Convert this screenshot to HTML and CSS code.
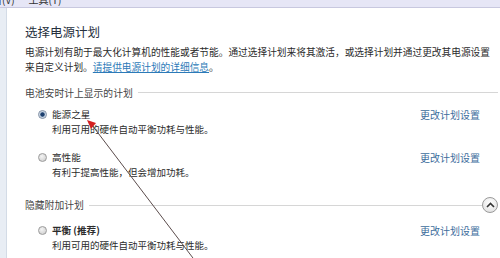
FILE: index.html
```html
<!DOCTYPE html>
<html lang="zh-CN">
<head>
    <meta charset="UTF-8">
    <title>电源选项</title>
    <link rel="stylesheet" href="styles.css">
</head>
<body>
    <div class="menubar">
        <span class="menu-item">查看(V)</span>
        <span class="menu-item">工具(T)</span>
    </div>

    <div class="window">
        <div class="sidebar"></div>

        <div class="main">
            <h1 class="title">选择电源计划</h1>
            <p class="intro">电源计划有助于最大化计算机的性能或者节能。通过选择计划来将其激活，或选择计划并通过更改其电源设置来自定义计划。<a href="#" class="info-link">请提供电源计划的详细信息</a>。</p>

            <div class="section-head">电池安时计上显示的计划</div>

            <div class="plan">
                <span class="radio checked"></span>
                <span class="plan-name">能源之星</span>
                <a href="#" class="plan-link">更改计划设置</a>
                <span class="plan-desc">利用可用的硬件自动平衡功耗与性能。</span>
            </div>

            <div class="plan">
                <span class="radio"></span>
                <span class="plan-name">高性能</span>
                <a href="#" class="plan-link">更改计划设置</a>
                <span class="plan-desc">有利于提高性能，但会增加功耗。</span>
            </div>

            <div class="section-head hidden-plans">
                隐藏附加计划
                <span class="collapse-btn">
                    <svg width="9" height="6" viewBox="0 0 9 6"><path d="M1 5 L4.5 1.5 L8 5" fill="none" stroke="#333" stroke-width="1.6"/></svg>
                </span>
            </div>

            <div class="plan">
                <span class="radio"></span>
                <span class="plan-name bold">平衡 (推荐)</span>
                <a href="#" class="plan-link">更改计划设置</a>
                <span class="plan-desc">利用可用的硬件自动平衡功耗与性能。</span>
            </div>
        </div>
    </div>

    <!-- annotation arrow drawn over the screenshot -->
    <svg class="annotation" width="500" height="258" viewBox="0 0 500 258">
        <line x1="92" y1="125" x2="196" y2="262" stroke="#5b4c4c" stroke-width="1"/>
        <polygon points="87,120 96,123 91,129" fill="#d42020"/>
    </svg>
</body>
</html>
```

FILE: styles.css
```css
/* General */
body {
    margin: 0;
    width: 500px;
    height: 258px;
    overflow: hidden;
    position: relative;
    background: #fff;
    font-family: "Noto Sans CJK SC", "Noto Sans", sans-serif;
    color: #2b2b2b;
}
a {
    text-decoration: none;
}

/* Menu bar (cut off at the top) */
.menubar {
    height: 7px;
    overflow: hidden;
    background: #e6e6f6;
    border-bottom: 1px solid #c8c8df;
    display: flex;
    gap: 14px;
    padding-left: 0;
    margin-left: -18px;
}
.menu-item {
    font-size: 10px;
    line-height: 10px;
    margin-top: -5px;
    color: #333;
}

/* Window body */
.window {
    display: flex;
    height: 250px;
}
.sidebar {
    width: 6px;
    background: #e8edf4;
    border-right: 1px solid #d3dbe6;
}
.main {
    flex: 1;
    padding: 0 2px 0 18px;
}

/* Heading and intro */
.title {
    font-size: 12.5px;
    font-weight: normal;
    line-height: 16px;
    margin: 16px 0 0;
    color: #26303d;
}
.intro {
    font-size: 9.7px;
    line-height: 15px;
    margin: 4.5px 0 0;
    color: #2b2b2b;
}
.info-link {
    color: #2c7ab8;
    text-decoration: underline;
}

/* Section headers */
.section-head {
    display: flex;
    align-items: center;
    font-size: 9.8px;
    line-height: 14px;
    color: #444;
    margin-top: 11px;
    margin-bottom: 7px;
}
.section-head::after {
    content: "";
    flex: 1;
    height: 1px;
    background: #d6d6d6;
    margin-left: 5px;
}
.hidden-plans {
    margin-top: 17px;
    margin-bottom: 10px;
}
.hidden-plans::after {
    order: 1;
}
.collapse-btn {
    order: 2;
    width: 14px;
    height: 14px;
    border: 1px solid #9a9a9a;
    border-radius: 50%;
    background: radial-gradient(circle at 50% 35%, #ffffff, #dcdcdc);
    display: flex;
    align-items: center;
    justify-content: center;
}

/* Plans */
.plan {
    display: grid;
    grid-template-columns: 9px 1fr auto;
    column-gap: 5px;
    padding-left: 13px;
    align-items: center;
}
.plan + .plan {
    margin-top: 13.5px;
}
.radio {
    width: 7px;
    height: 7px;
    border: 1px solid #9b9b9b;
    border-radius: 50%;
    background: radial-gradient(circle at 40% 35%, #f4f4f4, #c9c9c9);
}
.radio.checked {
    background: radial-gradient(circle, #1d3f6e 0 1.8px, #9fb4cc 2.4px, #e8eef5 3.5px);
    border-color: #7f8ea3;
}
.plan-name {
    font-size: 9.6px;
    line-height: 15px;
}
.plan-name.bold {
    font-weight: bold;
}
.plan-link {
    font-size: 10px;
    line-height: 15px;
    color: #3d6d9c;
    margin-right: 18px;
}
.plan-desc {
    grid-column: 2 / 4;
    font-size: 9.5px;
    line-height: 15px;
}

/* Annotation overlay */
.annotation {
    position: absolute;
    top: 0;
    left: 0;
    pointer-events: none;
}
```
